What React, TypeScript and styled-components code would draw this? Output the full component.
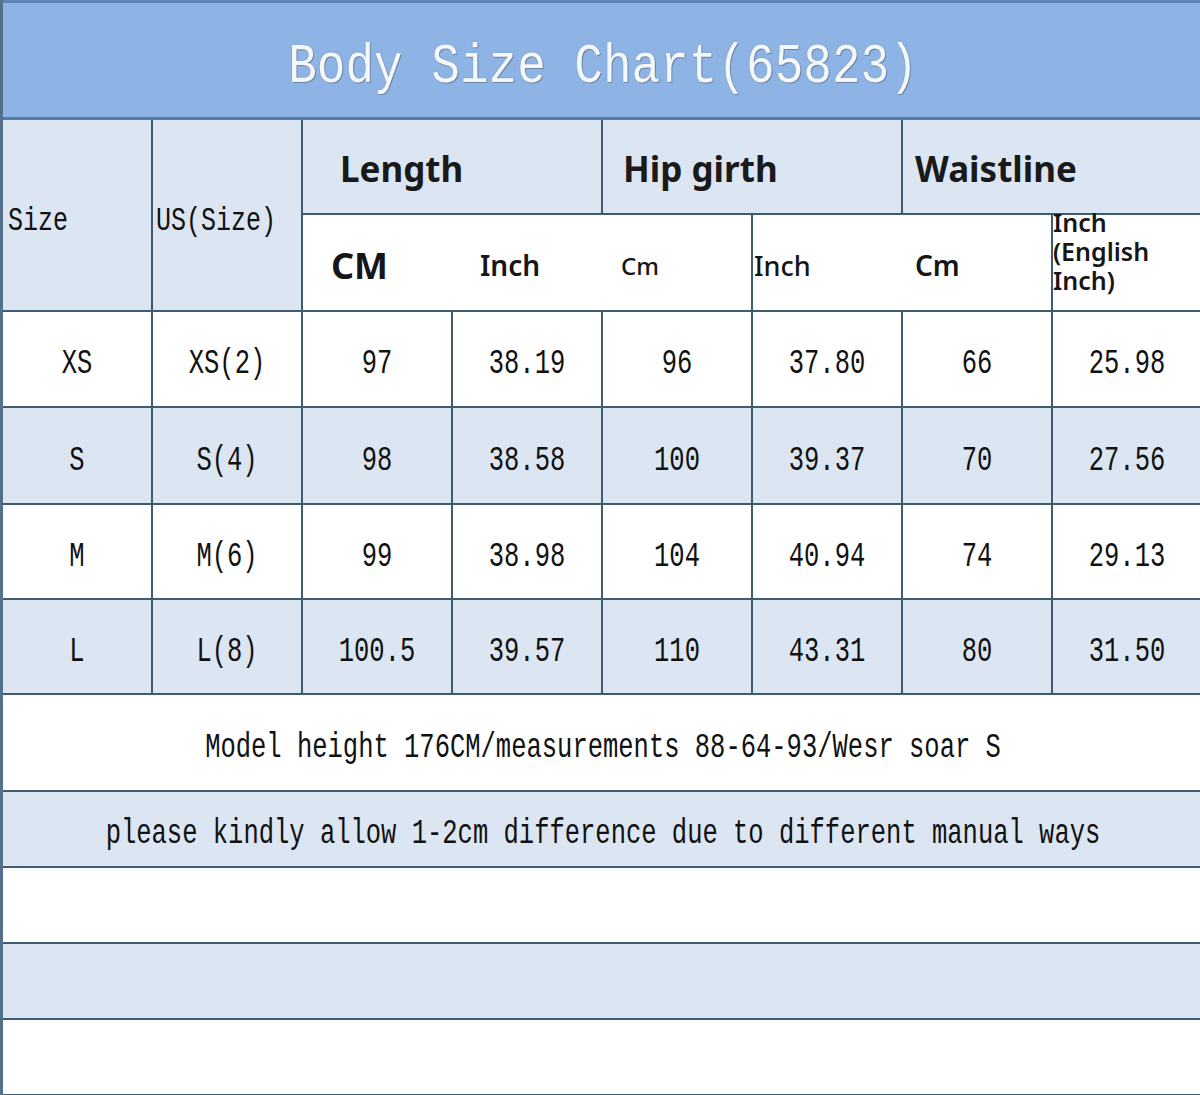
import React from 'react';
import styled, { createGlobalStyle, css } from 'styled-components';

const GlobalStyle = createGlobalStyle`
  html, body {
    margin: 0;
    padding: 0;
    background: #ffffff;
    overflow: hidden;
  }
`;

const LINE = '#3e5b70';
const PALE = '#dce6f2';

const Page = styled.div`
  width: 1200px;
  height: 1095px;
  overflow: hidden;
  border-left: 3px solid #52708c;
  box-sizing: border-box;
`;

const TitleBand = styled.div`
  height: 120px;
  box-sizing: border-box;
  border-top: 3px solid #5c83b6;
  border-bottom: 3px solid #5679a8;
  background: #8db4e4;
  display: flex;
  align-items: center;
  justify-content: center;
  padding-left: 3px;
`;

// SimSun-like lettering: monospace stretched vertically
const Tall = styled.span<{ $size: number; $stretch?: number; $shift?: number }>`
  display: inline-block;
  font-family: 'Liberation Mono', 'Courier New', monospace;
  font-size: ${(p) => p.$size}px;
  line-height: 1;
  white-space: pre;
  transform: translateY(${(p) => p.$shift ?? 6}px) scaleY(${(p) => p.$stretch ?? 1.36});
`;

const TitleText = styled(Tall)`
  color: #f4f8fd;
  font-weight: normal;
  text-shadow: 0 0 1px #5f7288, 1px 1px 0 rgba(80, 100, 130, 0.55);
`;

const Grid = styled.div`
  display: grid;
  grid-template-columns: repeat(8, 150px);
  grid-template-rows: 95px 97px 96px 97px 95px 95px 97px 76px 76px 76px 76px;
  width: 1200px;
`;

const Cell = styled.div<{
  $blue?: boolean;
  $right?: boolean;
  $col?: string;
  $row?: string;
  $pad?: number;
  $left?: boolean;
}>`
  box-sizing: border-box;
  display: flex;
  align-items: center;
  justify-content: ${(p) => (p.$left ? 'flex-start' : 'center')};
  padding-left: ${(p) => p.$pad ?? 0}px;
  background: ${(p) => (p.$blue ? PALE : '#ffffff')};
  border-bottom: 2px solid ${LINE};
  ${(p) =>
    p.$right &&
    css`
      border-right: 2px solid ${LINE};
    `}
  ${(p) => p.$col && `grid-column: ${p.$col};`}
  ${(p) => p.$row && `grid-row: ${p.$row};`}
  color: #111;
`;

const Group = styled.span`
  font-family: 'Noto Sans', 'Open Sans', sans-serif;
  font-weight: 700;
  font-size: 35px;
  color: #1a1a1a;
  margin-top: 4px;
`;

const Unit = styled.span<{ $size: number; $weight: number; $shift?: number }>`
  font-family: 'Noto Sans', 'Open Sans', sans-serif;
  font-size: ${(p) => p.$size}px;
  font-weight: ${(p) => p.$weight};
  line-height: 29px;
  color: #161616;
  margin-top: ${(p) => p.$shift ?? 6}px;
`;

const Stack = styled.span`
  display: flex;
  flex-direction: column;
  font-family: 'Noto Sans', 'Open Sans', sans-serif;
  font-size: 25px;
  font-weight: 600;
  line-height: 29px;
  color: #161616;
  margin-top: -22px;
`;

type Row = { size: string; us: string; values: string[] };

const rows: Row[] = [
  { size: 'XS', us: 'XS(2)', values: ['97', '38.19', '96', '37.80', '66', '25.98'] },
  { size: 'S', us: 'S(4)', values: ['98', '38.58', '100', '39.37', '70', '27.56'] },
  { size: 'M', us: 'M(6)', values: ['99', '38.98', '104', '40.94', '74', '29.13'] },
  { size: 'L', us: 'L(8)', values: ['100.5', '39.57', '110', '43.31', '80', '31.50'] },
];

const notes = [
  'Model height 176CM/measurements 88-64-93/Wesr soar S',
  'please kindly allow 1-2cm difference due to different manual ways',
  '',
  '',
  '',
];

const App: React.FC = () => {
  return (
    <Page>
      <GlobalStyle />
      <TitleBand>
        <TitleText $size={47.7} $stretch={1.15} $shift={8}>
          Body Size Chart(65823)
        </TitleText>
      </TitleBand>
      <Grid>
        <Cell $blue $right $row="1 / 3" $col="1" $left $pad={5}>
          <Tall $size={25}>Size</Tall>
        </Cell>
        <Cell $blue $right $row="1 / 3" $col="2" $left $pad={3}>
          <Tall $size={25}>US(Size)</Tall>
        </Cell>
        <Cell $blue $right $col="3 / 5" $left $pad={37}>
          <Group>Length</Group>
        </Cell>
        <Cell $blue $right $col="5 / 7" $left $pad={20}>
          <Group>Hip girth</Group>
        </Cell>
        <Cell $blue $col="7 / 9" $left $pad={12}>
          <Group>Waistline</Group>
        </Cell>

        <Cell $left $pad={28}>
          <Unit $size={36} $weight={700}>CM</Unit>
        </Cell>
        <Cell $left $pad={27}>
          <Unit $size={28} $weight={600}>Inch</Unit>
        </Cell>
        <Cell $right $left $pad={18}>
          <Unit $size={24} $weight={500}>Cm</Unit>
        </Cell>
        <Cell $left $pad={1}>
          <Unit $size={27} $weight={500}>Inch</Unit>
        </Cell>
        <Cell $right $left $pad={12}>
          <Unit $size={28} $weight={600}>Cm</Unit>
        </Cell>
        <Cell $left $pad={0}>
          <Stack>
            <span>Inch</span>
            <span>(English</span>
            <span>Inch)</span>
          </Stack>
        </Cell>

        {rows.map((r, i) => (
          <React.Fragment key={r.size}>
            <Cell $blue={i % 2 === 1} $right>
              <Tall $size={25.5}>{r.size}</Tall>
            </Cell>
            <Cell $blue={i % 2 === 1} $right>
              <Tall $size={25.5}>{r.us}</Tall>
            </Cell>
            {r.values.map((v, j) => (
              <Cell key={j} $blue={i % 2 === 1} $right>
                <Tall $size={25.5}>{v}</Tall>
              </Cell>
            ))}
          </React.Fragment>
        ))}

        {notes.map((n, i) => (
          <Cell key={i} $col="1 / 9" $blue={i % 2 === 1}>
            {n && <Tall $size={25.5}>{n}</Tall>}
          </Cell>
        ))}
      </Grid>
    </Page>
  );
};

export default App;
